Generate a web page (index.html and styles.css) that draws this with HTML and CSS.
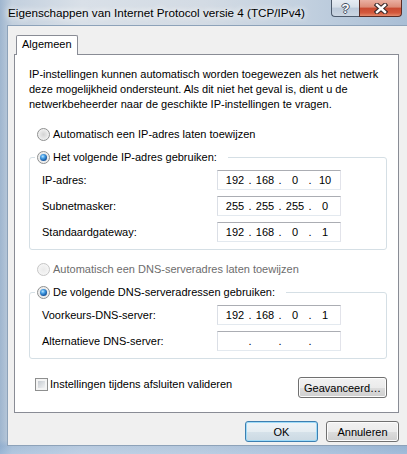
FILE: index.html
```html
<!DOCTYPE html>
<html>
<head>
    <link rel="stylesheet" href="styles.css">
</head>
<body>

    <div class="window">
        <div class="titlebar">
            <span class="title">Eigenschappen van Internet Protocol versie 4 (TCP/IPv4)</span>
            <div class="caption">
                <span class="cap help">?</span>
                <span class="cap close">
                    <svg width="14" height="11" viewBox="0 0 14 11">
                        <path d="M3 2 L11 9 M11 2 L3 9" stroke="#3b2a2a" stroke-width="4.6" stroke-linecap="square" fill="none"/>
                        <path d="M3 2 L11 9 M11 2 L3 9" stroke="#fff" stroke-width="2.4" stroke-linecap="square" fill="none"/>
                    </svg>
                </span>
            </div>
        </div>

        <div class="client">
            <div class="tabs"><span class="tab">Algemeen</span></div>

            <div class="panel">
                <p class="intro">IP-instellingen kunnen automatisch worden toegewezen als het netwerk<br>deze mogelijkheid ondersteunt. Als dit niet het geval is, dient u de<br>netwerkbeheerder naar de geschikte IP-instellingen te vragen.</p>

                <div class="option top"><span class="radio"></span>Automatisch een IP-adres laten toewijzen</div>

                <fieldset class="group">
                    <legend class="option"><span class="radio checked"></span>Het volgende IP-adres gebruiken:</legend>
                    <div class="row">
                        <span>IP-adres:</span>
                        <span class="ipbox"><span class="oct">192</span><span class="dot">.</span><span class="oct">168</span><span class="dot">.</span><span class="oct">0</span><span class="dot">.</span><span class="oct">10</span></span>
                    </div>
                    <div class="row">
                        <span>Subnetmasker:</span>
                        <span class="ipbox"><span class="oct">255</span><span class="dot">.</span><span class="oct">255</span><span class="dot">.</span><span class="oct">255</span><span class="dot">.</span><span class="oct">0</span></span>
                    </div>
                    <div class="row">
                        <span>Standaardgateway:</span>
                        <span class="ipbox"><span class="oct">192</span><span class="dot">.</span><span class="oct">168</span><span class="dot">.</span><span class="oct">0</span><span class="dot">.</span><span class="oct">1</span></span>
                    </div>
                </fieldset>

                <div class="option top disabled"><span class="radio"></span>Automatisch een DNS-serveradres laten toewijzen</div>

                <fieldset class="group">
                    <legend class="option"><span class="radio checked"></span>De volgende DNS-serveradressen gebruiken:</legend>
                    <div class="row">
                        <span>Voorkeurs-DNS-server:</span>
                        <span class="ipbox"><span class="oct">192</span><span class="dot">.</span><span class="oct">168</span><span class="dot">.</span><span class="oct">0</span><span class="dot">.</span><span class="oct">1</span></span>
                    </div>
                    <div class="row">
                        <span>Alternatieve DNS-server:</span>
                        <span class="ipbox"><span class="oct"></span><span class="dot">.</span><span class="oct"></span><span class="dot">.</span><span class="oct"></span><span class="dot">.</span><span class="oct"></span></span>
                    </div>
                </fieldset>

                <div class="validate">
                    <span class="check"><span class="checkbox"></span>Instellingen tijdens afsluiten valideren</span>
                    <button class="btn advanced">Geavanceerd…</button>
                </div>
            </div>

            <div class="footer">
                <button class="btn default">OK</button>
                <button class="btn">Annuleren</button>
            </div>
        </div>
    </div>

</body>
</html>
```

FILE: styles.css
```css
body { margin: 0; font-family: "Liberation Sans", Arial, sans-serif; font-size: 11px; color: #000; }

.window { width: 407px; height: 454px; box-sizing: border-box; overflow: hidden; display: flex; flex-direction: column; padding: 0 0 8px 7px;
    background: linear-gradient(180deg, rgba(255,255,255,0) 0, rgba(255,255,255,0) 440px, rgba(120,160,205,0.35) 446px, rgba(150,185,225,0.4) 454px),
                linear-gradient(90deg, #9fb6cf 0, #c3d0de 3%, #d9e0e8 20%, #d3dbe4 50%, #c2d0df 75%, #a9bed5 100%); }

.titlebar { height: 25px; flex: none; display: flex; align-items: flex-start; }
.title { padding-left: 1px; line-height: 25px; font-size: 11.7px; text-shadow: 0 0 6px #fff, 0 0 8px #fff; white-space: nowrap; }
.caption { margin-left: auto; margin-right: 5px; display: flex; }
.cap { height: 17px; box-sizing: border-box; border: 1px solid #4c5a6c; border-top: none; display: flex; align-items: center; justify-content: center; }
.help { width: 28px; border-right: none; border-radius: 0 0 0 4px; background: linear-gradient(#e6ecf3 0, #d6dfe9 45%, #bccada 50%, #cbd6e2 100%);
    color: #fff; font-weight: bold; font-size: 13px; line-height: 15px; text-shadow: 1px 0 #435164, -1px 0 #435164, 0 1px #435164, 0 -1px #435164; }
.close { width: 43px; border-color: #5b2c25; border-radius: 0 0 4px 0; background: linear-gradient(#eab0a2 0, #dc8b76 45%, #c84a30 50%, #d3583c 80%, #e48b6d 100%); }

.client { flex: 1; display: flex; flex-direction: column; background: #f0f0f0; border: 1px solid #8da2b9; border-right: none; padding: 9px 8px 0 6px; }

.tabs { height: 19px; display: flex; }
.tab { position: relative; z-index: 1; height: 20px; box-sizing: border-box; margin-left: 2px; padding: 1px 5px 0; line-height: 15px;
    background: #fff; border: 1px solid #898c95; border-bottom: none; border-radius: 2px 2px 0 0; }

.panel { background: #fff; border: 1px solid #898c95; padding: 12px 11px 14px 14px; }
.intro { margin: 0; line-height: 15px; }

.option { display: flex; align-items: center; line-height: 15px; height: 15px; }
.option.top { margin-top: 15px; padding-left: 8px; }
.option.disabled { color: #6d6d6d; }
.option .radio { margin-right: 3px; }
.group + .option.top { margin-top: 12px; }

.radio { width: 13px; height: 13px; box-sizing: border-box; flex: none; position: relative; border-radius: 50%; border: 1px solid #8e8f8f;
    background: radial-gradient(circle, #d4d4d4 0, #e6e6e6 45%, #f6f6f6 80%, #fbfbfb 100%); }
.radio.checked::after { content: ""; position: absolute; left: 2px; top: 2px; width: 7px; height: 7px; border-radius: 50%;
    background: radial-gradient(circle at 40% 35%, #bfe6ff 0, #4aa3e8 30%, #1a5ea8 65%, #0f3f7c 100%); }
.disabled .radio { border-color: #c6c6c6; background: radial-gradient(circle, #eaeaea 0, #f2f2f2 50%, #fafafa 100%); }

.group { margin: 8px 0 0; padding: 5px 45px 7px 12px; border: 1px solid #d5dfe5; border-radius: 3px; }
.group legend { margin-left: -7px; padding: 0 11px 0 2px; }

.row { display: flex; align-items: center; justify-content: space-between; height: 20px; }
.row + .row { margin-top: 6px; }

.ipbox { width: 124px; height: 20px; box-sizing: border-box; display: flex; align-items: center; padding-left: 5px; background: #fff;
    border: 1px solid; border-color: #abadb3 #e2e3ea #e3e9ef #dbdfe6; }
.oct { width: 24px; text-align: center; }
.dot { width: 6px; text-align: center; }

.validate { display: flex; align-items: flex-start; justify-content: space-between; margin-top: 18px; }
.check { display: flex; align-items: center; line-height: 15px; padding-left: 6px; }
.checkbox { width: 13px; height: 13px; box-sizing: border-box; margin-right: 2px; padding: 2px; border: 1px solid #8e8f8f;
    background: linear-gradient(135deg, #c6cbd1, #f1f2f3) content-box, #f4f4f4; }

.btn { font: inherit; color: #000; height: 21px; padding: 0; border: 1px solid #707070; border-radius: 3px; cursor: pointer;
    background: linear-gradient(#f2f2f2 0, #ebebeb 50%, #dddddd 51%, #cfcfcf 100%); box-shadow: inset 0 0 0 1px #fcfcfc; }
.advanced { width: 89px; }
.btn.default { border-color: #3c7fb1; box-shadow: inset 0 0 0 1px #9fdbf8; background: linear-gradient(#eef4f8 0, #e5edf2 50%, #d6e2ea 51%, #cbd9e3 100%); }

.footer { display: flex; justify-content: flex-end; gap: 8px; margin-top: 8px; }
.footer .btn { width: 73px; }
```
